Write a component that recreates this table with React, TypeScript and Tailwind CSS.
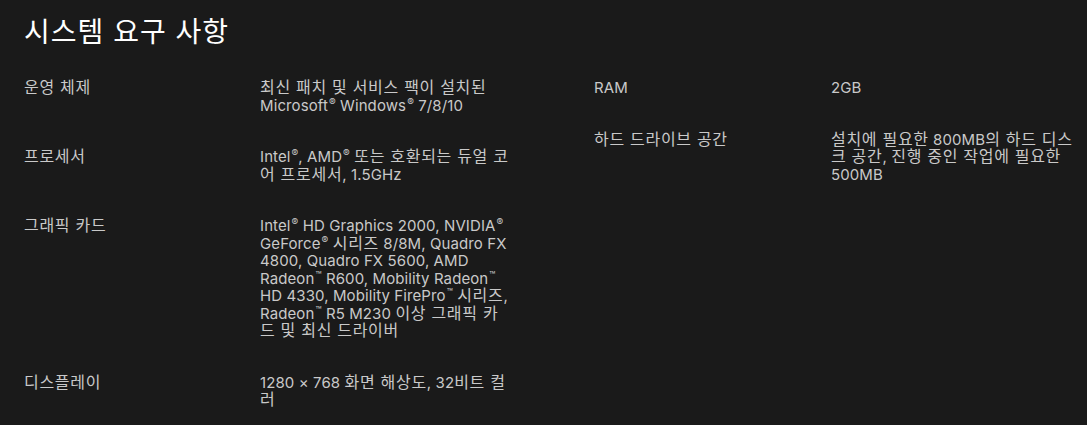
import React from "react";

type Spec = { label: string; value: React.ReactNode };

// Hangul runs render a touch larger and looser than the latin text, as on the original page
const ko = (s: string) =>
  s.split(/([가-힣]+(?: [가-힣]+)*)/).map((part, i) =>
    /[가-힣]/.test(part) ? (
      <span key={i} className="text-[16px] tracking-[0.7px]">
        {part}
      </span>
    ) : (
      part
    )
  );

const R = () => <sup className="text-[10px] ml-[1px]">®</sup>;
const TM = () => <sup className="text-[10px] ml-[1px]">™</sup>;

const leftSpecs: Spec[] = [
  {
    label: "운영 체제",
    value: (
      <>
        {ko("최신 패치 및 서비스 팩이 설치된 Microsoft")}
        <R /> Windows<R /> 7/8/10
      </>
    ),
  },
  {
    label: "프로세서",
    value: (
      <>
        Intel<R />, AMD<R />
        {ko(" 또는 호환되는 듀얼 코어 프로세서, 1.5GHz")}
      </>
    ),
  },
  {
    label: "그래픽 카드",
    value: (
      <>
        Intel<R /> HD Graphics 2000, NVIDIA<R /> GeForce<R />
        {ko(" 시리즈 8/8M, Quadro FX 4800, Quadro FX 5600, AMD Radeon")}
        <TM /> R600, Mobility Radeon<TM /> HD 4330, Mobility FirePro<TM />
        {ko(" 시리즈, Radeon")}
        <TM />
        {ko(" R5 M230 이상 그래픽 카드 및 최신 드라이버")}
      </>
    ),
  },
  { label: "디스플레이", value: ko("1280 × 768 화면 해상도, 32비트 컬러") },
];

const rightSpecs: Spec[] = [
  { label: "RAM", value: "2GB" },
  {
    label: "하드 드라이브 공간",
    value: ko("설치에 필요한 800MB의 하드 디스크 공간, 진행 중인 작업에 필요한 500MB"),
  },
];

const SpecList = ({ specs, cols }: { specs: Spec[]; cols: string }) => (
  <div className="flex flex-col gap-[34px]">
    {specs.map((s) => (
      <div key={s.label} className={`grid ${cols}`}>
        <div className="text-[#c9c9c9]">{ko(s.label)}</div>
        <div className="text-[#c9c9c9]">{s.value}</div>
      </div>
    ))}
  </div>
);

export default function App() {
  return (
    <div
      className="min-h-[425px] w-full bg-[#1a1a1a] px-6 pt-[14px] text-[15px] leading-[17.5px] tracking-[0.1px]"
      style={{ fontFamily: "Inter, 'Noto Sans CJK KR', sans-serif" }}
    >
      <h1 className="text-[28px] leading-[36px] text-white tracking-[1px]">시스템 요구 사항</h1>
      <div className="mt-[29px] grid grid-cols-[570px_1fr]">
        <SpecList specs={leftSpecs} cols="grid-cols-[236px_252px]" />
        <SpecList specs={rightSpecs} cols="grid-cols-[237px_248px]" />
      </div>
    </div>
  );
}
